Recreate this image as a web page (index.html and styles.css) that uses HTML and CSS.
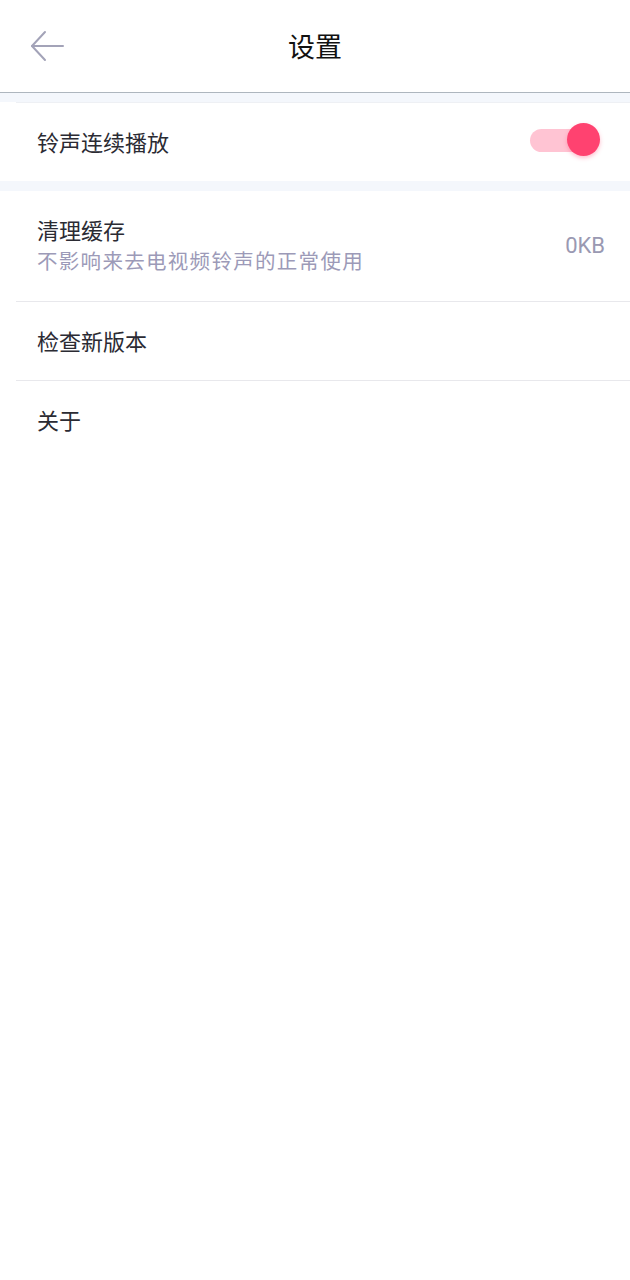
FILE: index.html
```html
<!DOCTYPE html>
<html lang="zh-CN">
<head>
<meta charset="utf-8">
<title>设置</title>
<link rel="stylesheet" href="styles.css">
</head>
<body>
<div class="page">
  <header class="topbar">
    <span class="back">
      <svg width="36" height="32" viewBox="0 0 36 32" fill="none" stroke="#a3a3b8" stroke-width="2" stroke-linecap="round" stroke-linejoin="round">
        <path d="M34 16H3"/>
        <path d="M16 2L3 16L16 30"/>
      </svg>
    </span>
    <h1 class="title">设置</h1>
  </header>
  <div class="band band-top"></div>
  <section class="group">
    <div class="row row-first">
      <span class="label">铃声连续播放</span>
      <span class="switch on"><span class="knob"></span></span>
    </div>
  </section>
  <div class="band"></div>
  <section class="group">
    <div class="row row-tall">
      <div class="texts">
        <span class="label">清理缓存</span>
        <span class="sub">不影响来去电视频铃声的正常使用</span>
      </div>
      <span class="value">0KB</span>
    </div>
    <div class="row">
      <span class="label">检查新版本</span>
    </div>
    <div class="row row-last">
      <span class="label">关于</span>
    </div>
  </section>
</div>
</body>
</html>
```
FILE: styles.css
```css
* { box-sizing: border-box; }
html, body { margin: 0; padding: 0; background: #ffffff; }
body {
  font-family: "Noto Sans CJK SC", "Noto Sans", sans-serif;
  color: #2b2b33;
}
.page { width: 630px; }
.topbar {
  height: 93px;
  border-bottom: 1px solid #aeb6be;
  display: flex;
  align-items: center;
  justify-content: center;
  position: relative;
  padding-bottom: 2px;
}
.back {
  position: absolute;
  left: 29px;
  top: 30px;
  width: 36px;
  height: 32px;
  display: block;
}
.back svg { display: block; }
.title {
  margin: 0;
  font-size: 27px;
  font-weight: 400;
  color: #111111;
  line-height: 1;
}
.band {
  height: 10px;
  background: #f4f7fc;
}
.band-top { height: 9px; }
.group { background: #ffffff; }
.row {
  margin-left: 16px;
  padding-left: 21px;
  padding-right: 24px;
  padding-bottom: 3px;
  height: 79px;
  border-bottom: 1px solid #e8e8ec;
  display: flex;
  align-items: center;
  justify-content: space-between;
}
.row-first {
  height: 79px;
  border-top: 1px solid #eef0f4;
  border-bottom: none;
  padding-right: 30px;
}
.row-tall { height: 111px; }
.row-last { border-bottom: none; }
.label {
  font-size: 22px;
  line-height: 1;
  color: #2b2b33;
}
.texts {
  display: flex;
  flex-direction: column;
  gap: 10px;
}
.sub {
  font-size: 20.5px;
  letter-spacing: 1.3px;
  line-height: 1;
  color: #9c9ab8;
}
.value {
  font-family: Roboto, "Noto Sans", sans-serif;
  font-size: 22px;
  color: #9a99b2;
  line-height: 1;
  margin-right: 1px;
  margin-top: 2px;
}
.switch {
  position: relative;
  width: 70px;
  height: 34px;
  display: block;
  margin-top: -1px;
}
.switch::before {
  content: "";
  position: absolute;
  left: 0;
  top: 6px;
  width: 60px;
  height: 23px;
  border-radius: 12px;
  background: #ffc4d3;
}
.knob {
  position: absolute;
  right: 0;
  top: 0;
  width: 33px;
  height: 33px;
  border-radius: 50%;
  background: #ff4270;
  box-shadow: 0 2px 4px rgba(255, 66, 112, 0.35);
}
```
